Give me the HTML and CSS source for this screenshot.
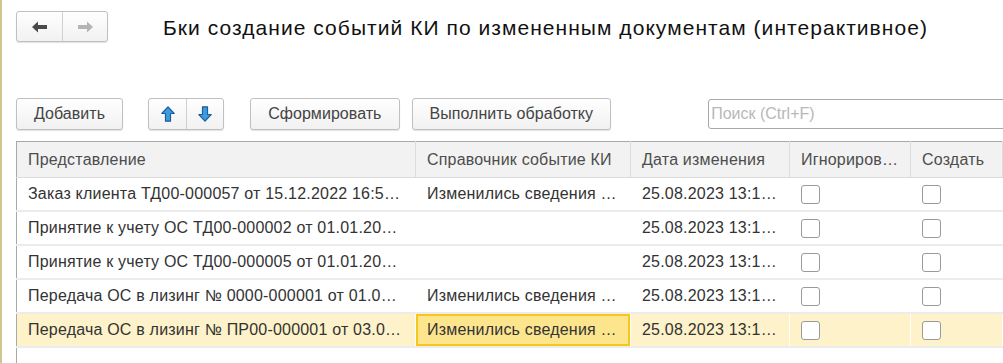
FILE: index.html
```html
<!DOCTYPE html>
<html lang="ru">
<head>
    <meta charset="UTF-8">
    <title>Бки создание событий КИ</title>
    <link rel="stylesheet" href="styles.css">
</head>
<body>
    <div class="window">
        <div class="header">
            <div class="btn-group nav">
                <button class="btn icon-btn">
                    <svg width="16" height="12" viewBox="0 0 16 12"><path d="M0 6 L6 0.5 L6 4 L15 4 L15 8 L6 8 L6 11.5 Z" fill="#4a4a4a"/></svg>
                </button>
                <button class="btn icon-btn">
                    <svg width="16" height="12" viewBox="0 0 16 12"><path d="M16 6 L10 0.5 L10 4 L1 4 L1 8 L10 8 L10 11.5 Z" fill="#b4b4b4"/></svg>
                </button>
            </div>
            <h1 class="title">Бки создание событий КИ по измененным документам (интерактивное)</h1>
        </div>

        <div class="toolbar">
            <button class="btn text-btn add-btn">Добавить</button>
            <div class="btn-group updown">
                <button class="btn icon-btn">
                    <svg width="14" height="16" viewBox="0 0 14 16"><path d="M7 0.8 L13.2 7.5 L9.5 7.5 L9.5 15.2 L4.5 15.2 L4.5 7.5 L0.8 7.5 Z" fill="#3d9be0" stroke="#1c5f9c" stroke-width="1.2" stroke-linejoin="round"/></svg>
                </button>
                <button class="btn icon-btn">
                    <svg width="14" height="16" viewBox="0 0 14 16"><path d="M7 15.2 L13.2 8.5 L9.5 8.5 L9.5 0.8 L4.5 0.8 L4.5 8.5 L0.8 8.5 Z" fill="#3d9be0" stroke="#1c5f9c" stroke-width="1.2" stroke-linejoin="round"/></svg>
                </button>
            </div>
            <button class="btn text-btn">Сформировать</button>
            <button class="btn text-btn">Выполнить обработку</button>
            <input class="search" type="text" placeholder="Поиск (Ctrl+F)">
        </div>

        <table class="grid">
            <colgroup>
                <col style="width:399px">
                <col style="width:215px">
                <col style="width:159px">
                <col style="width:121px">
                <col style="width:92px">
                <col style="width:30px">
            </colgroup>
            <thead>
                <tr>
                    <th>Представление</th>
                    <th>Справочник событие КИ</th>
                    <th>Дата изменения</th>
                    <th>Игнориров…</th>
                    <th>Создать</th>
                    <th></th>
                </tr>
            </thead>
            <tbody>
                <tr>
                    <td>Заказ клиента ТД00-000057 от 15.12.2022 16:5…</td>
                    <td>Изменились сведения …</td>
                    <td>25.08.2023 13:1…</td>
                    <td><span class="check"></span></td>
                    <td><span class="check"></span></td>
                    <td></td>
                </tr>
                <tr>
                    <td>Принятие к учету ОС ТД00-000002 от 01.01.20…</td>
                    <td></td>
                    <td>25.08.2023 13:1…</td>
                    <td><span class="check"></span></td>
                    <td><span class="check"></span></td>
                    <td></td>
                </tr>
                <tr>
                    <td>Принятие к учету ОС ТД00-000005 от 01.01.20…</td>
                    <td></td>
                    <td>25.08.2023 13:1…</td>
                    <td><span class="check"></span></td>
                    <td><span class="check"></span></td>
                    <td></td>
                </tr>
                <tr>
                    <td>Передача ОС в лизинг № 0000-000001 от 01.0…</td>
                    <td>Изменились сведения …</td>
                    <td>25.08.2023 13:1…</td>
                    <td><span class="check"></span></td>
                    <td><span class="check"></span></td>
                    <td></td>
                </tr>
                <tr class="selected">
                    <td>Передача ОС в лизинг № ПР00-000001 от 03.0…</td>
                    <td class="current">Изменились сведения …</td>
                    <td>25.08.2023 13:1…</td>
                    <td><span class="check"></span></td>
                    <td><span class="check"></span></td>
                    <td></td>
                </tr>
                <tr class="empty">
                    <td></td><td></td><td></td><td></td><td></td><td></td>
                </tr>
            </tbody>
        </table>
    </div>
</body>
</html>
```

FILE: styles.css
```css
html, body {
    margin: 0;
    padding: 0;
    height: 100%;
    overflow: hidden;
    background: #fff;
}
body {
    font-family: "Liberation Sans", Arial, sans-serif;
    color: #333;
}
.window {
    height: 100%;
    border-left: 2px solid #cfc68f;
    padding-left: 14px;
    box-sizing: border-box;
    width: 1040px;
}
.header {
    display: flex;
    align-items: center;
    padding-top: 11px;
    height: 31px;
}
.title {
    margin: 0 0 0 55px;
    font-size: 21px;
    letter-spacing: 1.05px;
    font-weight: normal;
    color: #111;
    position: relative;
    top: 1px;
    white-space: nowrap;
}
.btn {
    font-family: inherit;
    background: linear-gradient(#ffffff, #f1f1f1);
    border: 1px solid #c0c0c0;
    border-radius: 3px;
    box-shadow: 0 1px 1px rgba(0, 0, 0, 0.12);
    color: #444;
    padding: 0;
    margin: 0;
    cursor: pointer;
    box-sizing: border-box;
}
.btn-group {
    display: flex;
    border: 1px solid #c0c0c0;
    border-radius: 3px;
    box-shadow: 0 1px 1px rgba(0, 0, 0, 0.12);
    background: linear-gradient(#ffffff, #f1f1f1);
    box-sizing: border-box;
}
.btn-group .btn {
    border: none;
    box-shadow: none;
    background: none;
    border-radius: 0;
    display: flex;
    align-items: center;
    justify-content: center;
}
.btn-group .btn + .btn {
    border-left: 1px solid #d0d0d0;
}
.nav {
    height: 31px;
}
.nav .btn {
    width: 45px;
    height: 29px;
}
.toolbar {
    display: flex;
    align-items: center;
    margin-top: 55px;
    height: 33px;
}
.text-btn {
    height: 32px;
    font-size: 16px;
    letter-spacing: 0.05px;
    padding: 0 17px;
    margin-right: 12px;
    white-space: nowrap;
}
.add-btn {
    margin-right: 25px;
}
.updown {
    height: 32px;
    margin-right: 26px;
}
.updown .btn {
    width: 37px;
    height: 30px;
}
.search {
    margin-left: 85px;
    height: 30px;
    width: 330px;
    border: 1px solid #a8a8a8;
    border-radius: 3px;
    font-family: inherit;
    font-size: 16px;
    padding: 0 2px;
    box-sizing: border-box;
    outline: none;
    flex-shrink: 0;
}
.search::placeholder {
    color: #b8b8b8;
}
.grid {
    margin-top: 11px;
    border-collapse: collapse;
    table-layout: fixed;
    width: 1016px;
    border: 1px solid #a8a8a8;
    font-size: 16px;
    letter-spacing: 0.2px;
}
.grid th {
    background: #f2f2f2;
    font-weight: normal;
    color: #4d4d4d;
    text-align: left;
    height: 35px;
    padding: 0 11px;
    border-right: 1px solid #dcdcdc;
    border-bottom: 1px solid #dcdcdc;
    white-space: nowrap;
    overflow: hidden;
}
.grid td {
    height: 32px;
    padding: 0 11px;
    border-bottom: 2px solid #ececec;
    border-right: 1px solid #fff;
    white-space: nowrap;
    overflow: hidden;
    color: #333;
}
.grid tr.selected td {
    background: #fdf2c9;
}
.grid tr.selected td.current {
    background: #fde58e;
    box-shadow: inset 0 0 0 2px #f6c619;
}
.grid tr.empty td {
    border-bottom: none;
}
.check {
    display: block;
    width: 17px;
    height: 17px;
    border: 1px solid #9a9a9a;
    border-radius: 3px;
    background: #fff;
}
```
